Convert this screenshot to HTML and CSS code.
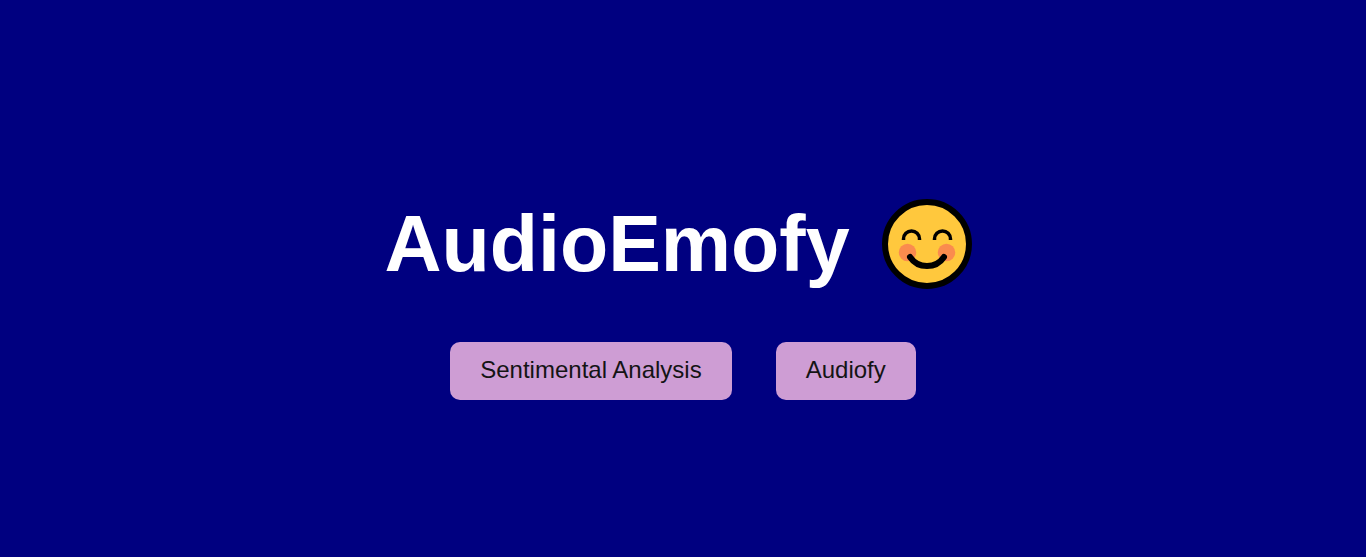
FILE: index.html
```
<!DOCTYPE html>
<html lang="en">
<head>
<meta charset="utf-8">
<title>AudioEmofy</title>
<link rel="stylesheet" href="styles.css">
</head>
<body>
<main class="hero">
  <h1 class="title">AudioEmofy
    <svg class="emoji" viewBox="0 0 90 90" role="img" aria-label="Smiling face">
      <circle cx="45" cy="45" r="42" fill="#ffc83d" stroke="#000" stroke-width="6"/>
      <circle cx="25.500" cy="53.500" r="8.700" fill="#fa8b4e"/>
      <circle cx="64.500" cy="53.500" r="8.700" fill="#fa8b4e"/>
      <g fill="none" stroke="#000">
        <path d="M21.500 41V40a8 8 0 0 1 16 0V41" stroke-width="3.500"/>
        <path d="M52.500 41V40a8 8 0 0 1 16 0V41" stroke-width="3.500"/>
        <path d="M28 58C32 64 38 67 45 67S58 64 62 58" stroke-width="6" stroke-linecap="round"/>
      </g>
    </svg>
  </h1>
  <nav class="actions">
    <a class="action" href="#sentiment">Sentimental Analysis</a>
    <a class="action" href="#audiofy">Audiofy</a>
  </nav>
</main>
</body>
</html>
```
FILE: styles.css
```
body {
  margin: 0;
  background: #000080;
  font-family: "Liberation Sans", Arial, sans-serif;
}
.hero {
  min-height: 100vh;
  box-sizing: border-box;
  padding-top: 40px;
  display: flex;
  flex-direction: column;
  align-items: center;
  justify-content: center;
  gap: 52px;
}
.title {
  margin: 0;
  padding-right: 10px;
  display: flex;
  align-items: center;
  gap: 32px;
  color: #fff;
  font-size: 79px;
  line-height: 92px;
}
.emoji {
  width: 90px;
  height: 90px;
}
.actions {
  display: flex;
  gap: 44px;
}
.action {
  padding: 14px 30px 16px;
  border-radius: 10px;
  background: #ce9dd4;
  color: #141414;
  font-size: 24px;
  line-height: 28px;
  text-decoration: none;
}
```
